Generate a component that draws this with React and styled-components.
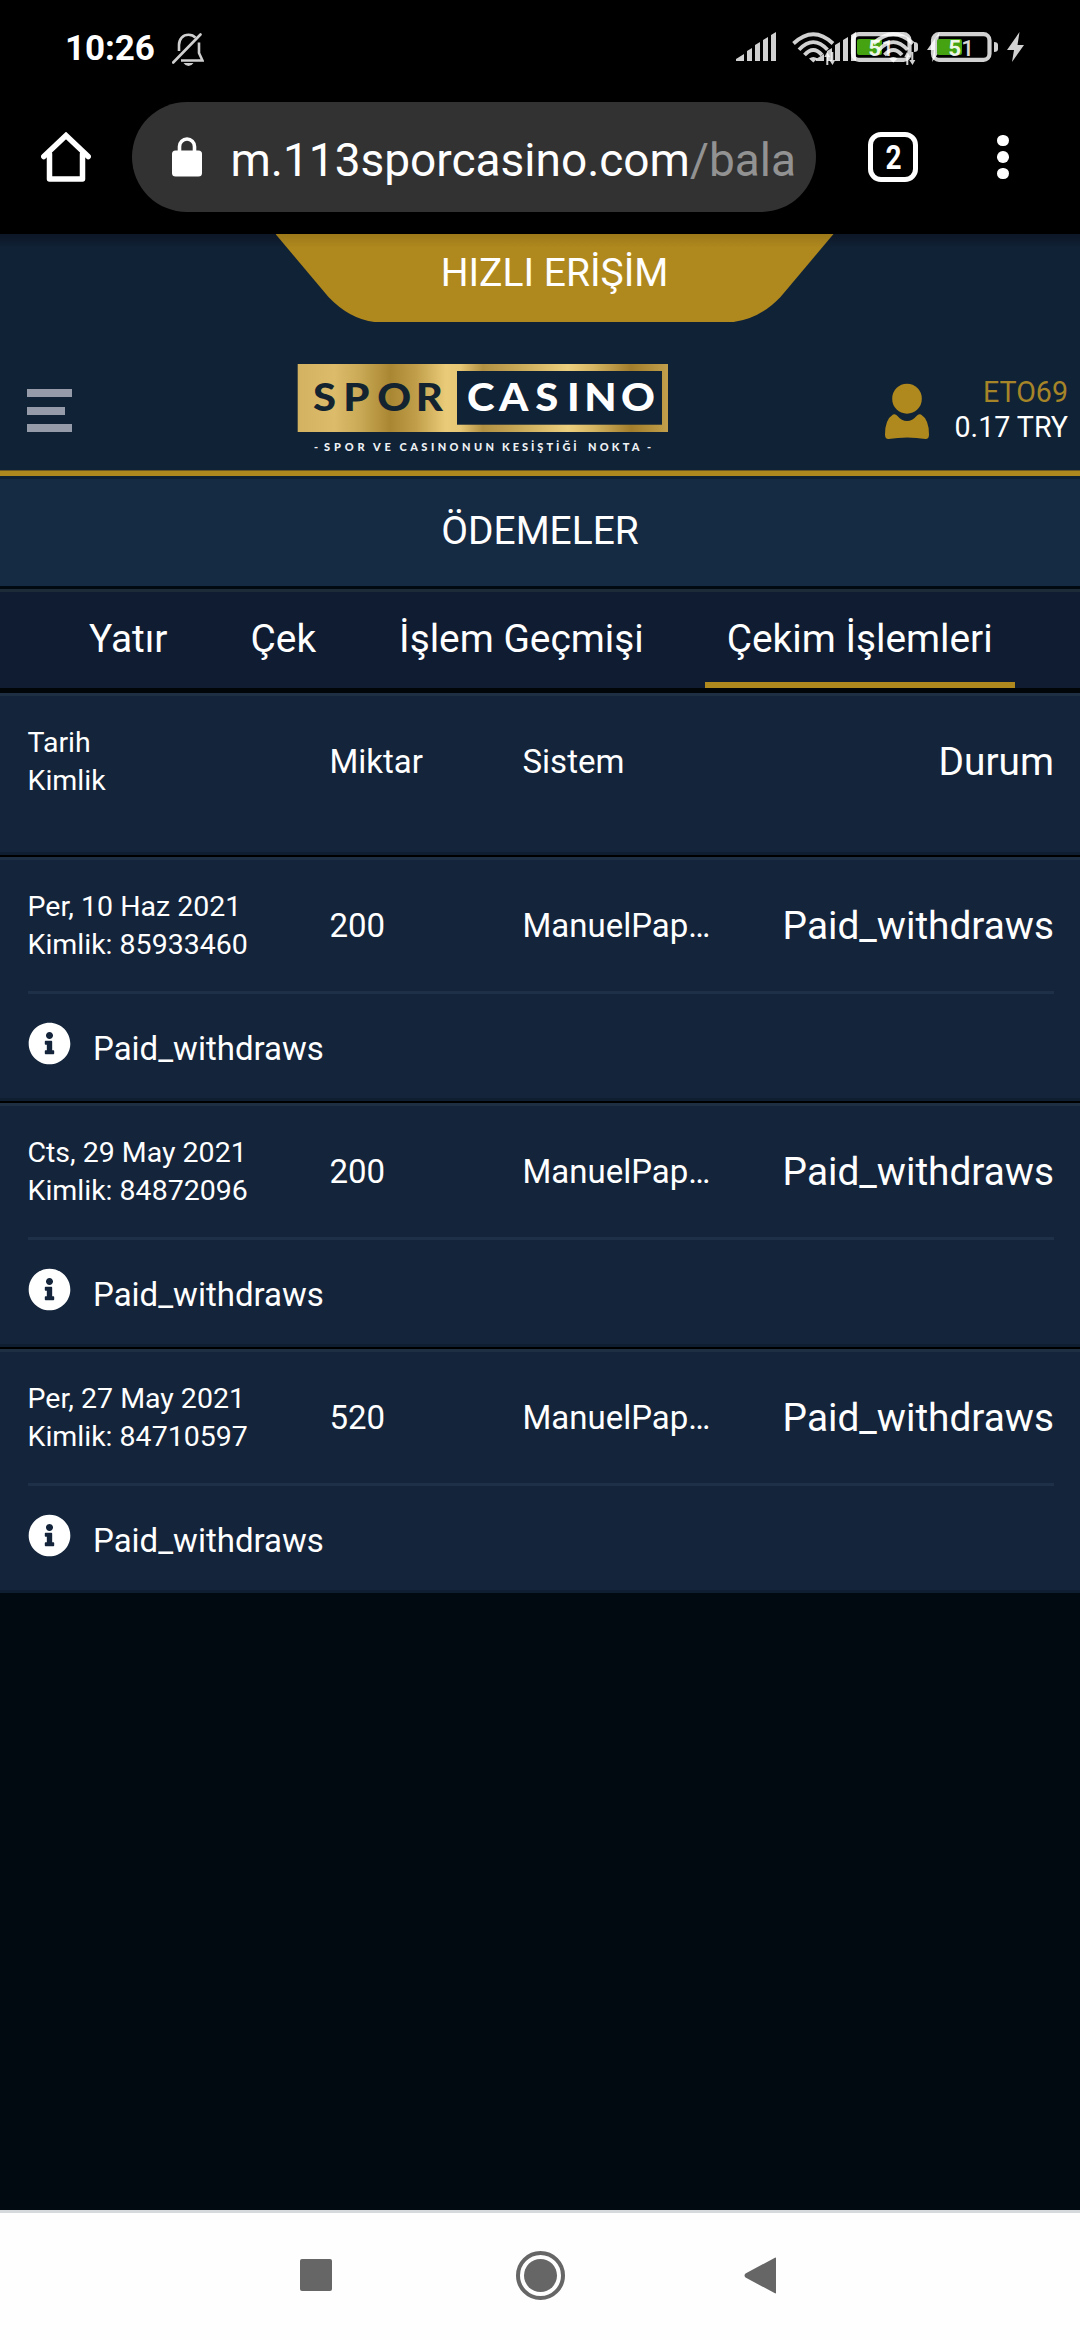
import React from "react";
import styled, { createGlobalStyle } from "styled-components";
import { FaInfoCircle } from "react-icons/fa";

const GOLD = "#b0891e";

const Global = createGlobalStyle`
  * { box-sizing: border-box; }
  body { margin: 0; background: #020a11; }
`;

const Screen = styled.div`
  width: 1080px;
  height: 2340px;
  display: flex;
  flex-direction: column;
  background: #020a11;
  color: #fff;
  font-family: Roboto, "Noto Sans", sans-serif;
  overflow: hidden;
`;

const StatusBar = styled.div`
  height: 98px;
  flex: none;
  background: #000;
  display: flex;
  align-items: center;
  padding: 0 56px 0 65px;
`;

const Clock = styled.span`
  font-size: 35px;
  font-weight: 700;
  line-height: 40px;
  letter-spacing: -0.1px;
`;

const MutedBell = styled.svg`
  margin: 0 auto 0 17px;
`;

const BrowserBar = styled.div`
  height: 136px;
  flex: none;
  background: #000;
  display: flex;
  align-items: flex-start;
  padding: 4px 0 0 41px;
`;

const HomeIcon = styled.svg`
  margin: 30px 41px 0 0;
  flex: none;
`;

const AddressPill = styled.div`
  width: 684px;
  height: 110px;
  border-radius: 55px;
  background: #323232;
  display: flex;
  align-items: center;
  padding-left: 40px;
`;

const Url = styled.span`
  margin: 5px 0 0 28.5px;
  font-size: 46px;
  line-height: 54px;
  white-space: nowrap;
`;

const UrlPath = styled.span`
  color: #929292;
`;

const TabCounter = styled.div`
  width: 50px;
  height: 50px;
  margin: 30px 0 0 52px;
  border: 5.5px solid #fff;
  border-radius: 13px;
  display: flex;
  align-items: center;
  justify-content: center;
  font-size: 33px;
  font-weight: 700;
  line-height: 39px;
`;

const TabCount = styled.span`
  transform: scaleX(0.85);
`;

const MenuDots = styled.div`
  margin: 32.5px 0 0 79px;
  display: flex;
  flex-direction: column;
  gap: 5px;
`;

const Dot = styled.i`
  width: 11.6px;
  height: 11.6px;
  border-radius: 50%;
  background: #fff;
`;

const SiteHeader = styled.header`
  height: 245px;
  flex: none;
  background: linear-gradient(#0c1626, #102236 14px);
  border-bottom: 3px solid #0f2133;
  display: flex;
  flex-direction: column;
`;

const QuickAccess = styled.div`
  width: 558px;
  height: 88px;
  margin-left: 275.5px;
  background: linear-gradient(#9c7819, ${GOLD} 14px);
  clip-path: path("M0 0 H558 L505 63 Q484 85 458 88 H99 Q74 85 53 63 Z");
  font-size: 39px;
  line-height: 79px;
  text-align: center;
`;

const BrandRow = styled.div`
  height: 148px;
  display: flex;
  align-items: flex-start;
  padding: 41px 12px 0 27px;
`;

const Burger = styled.div`
  width: 45px;
  margin-top: 26px;
  display: flex;
  flex-direction: column;
  gap: 9.5px;
`;

const BurgerLine = styled.i`
  width: ${(p) => p.$w}px;
  height: 8px;
  background: #959ba8;
`;

const Logo = styled.svg`
  margin-left: 225px;
  flex: none;
`;

const UserIcon = styled.svg`
  margin: 20px 0 0 215px;
  flex: none;
`;

const Account = styled.div`
  margin: 12px 0 0 auto;
  display: flex;
  flex-direction: column;
  align-items: flex-end;
  font-size: 28.6px;
  line-height: 35px;
  white-space: nowrap;
`;

const UserName = styled.span`
  color: #a68428;
`;

const GoldRule = styled.div`
  height: 6px;
  background: linear-gradient(#6c5822 1px, ${GOLD} 1px);
`;

const PageTitle = styled.h1`
  margin: 0;
  height: 110px;
  flex: none;
  background: #152a43;
  border-bottom: 3px solid #020a11;
  font-size: 38.9px;
  font-weight: 400;
  line-height: 104px;
  text-align: center;
`;

const Tabs = styled.nav`
  height: 104px;
  flex: none;
  background: #0f1c31;
  border-top: 3px solid #1d2b39;
  border-bottom: 5px solid #010508;
  display: flex;
  padding-left: 67px;
  gap: 39px;
`;

const Tab = styled.a`
  height: 96px;
  padding: 0 22px;
  font-size: 38.85px;
  line-height: 94px;
  white-space: nowrap;
  border-bottom: 6px solid ${(p) => (p.$active ? GOLD : "transparent")};
`;

const Card = styled.section`
  flex: none;
  height: ${(p) => (p.$header ? 162 : 244)}px;
  margin-bottom: 2px;
  box-shadow: ${(p) => (p.$last ? "none" : "0 2px #000")};
  padding: 0 26px 0 28px;
  background: #13243b;
  border-top: 3px solid #1e2e43;
  border-bottom: 3px solid #0f1e31;
`;

const Cells = styled.div`
  height: 131px;
  display: grid;
  grid-template-columns: 301px 193px 200px 1fr;
  align-items: center;
`;

const IdCell = styled.div`
  margin-left: -0.5px;
  font-size: 28.5px;
  line-height: 38px;
  white-space: nowrap;
`;

const Cell = styled.div`
  padding-left: 0.5px;
  font-size: 33px;
  line-height: 38px;
  overflow: hidden;
  white-space: nowrap;
`;

const StatusCell = styled.div`
  font-size: 38.8px;
  line-height: 46px;
  text-align: right;
  white-space: nowrap;
`;

const Note = styled.div`
  height: 107px;
  border-top: 3px solid #1e2f48;
  display: flex;
  align-items: flex-start;
  gap: 22px;
  padding-top: 28px;
  font-size: 33px;
  line-height: 54px;
  svg { flex: none; }
`;

const SystemNav = styled.footer`
  height: 130px;
  flex: none;
  margin-top: auto;
  background: #fefefe;
  border-top: 3px solid #d6d9db;
  display: flex;
  align-items: center;
  padding: 0 0 3px 300px;
`;

const HomeKey = styled.svg`
  margin-left: 184px;
`;

const BackKey = styled.svg`
  margin-left: 179px;
`;

const rows = [
  { date: "Per, 10 Haz 2021", id: "85933460", amount: "200" },
  { date: "Cts, 29 May 2021", id: "84872096", amount: "200" },
  { date: "Per, 27 May 2021", id: "84710597", amount: "520" },
];

function StatusGroup({ x }) {
  return (
    <g transform={`translate(${x} 0)`} fill="#fff" fillOpacity="0.82" stroke="none">
      <path d="M0 29v-2l8-5v7zM11 29V19l5-3v13zM19 29V13l5-3v19zM27 29V8l5-3v24zM35 29V3l5-3v29z" />
      <g fill="none" stroke="#fff" strokeOpacity="0.82" strokeWidth="3.8">
        <path d="M57.5 11.5Q77.3-7 97 11.5M63 17.7Q77.3 2.500 91.500 17.700M68.500 23Q77.300 13 86 23" />
      </g>
      <path d="M73 26.500Q77.300 23.500 81.600 26.500L77.300 30.500zM91 20l3.300 5h-2v8h-2V25h-2zM96.500 33l-3.200-5h2v-8h2v8h2z" />
      <rect x="121" y="7" width="25" height="16" rx="2" fill="#45a311" fillOpacity="1" />
      <rect x="117" y="2.200" width="56.500" height="25.600" rx="6" fill="none" stroke="#fff" strokeOpacity="0.82" strokeWidth="4.200" />
      <path d="M178 10q4 0 4 3v4q0 3-4 3z" />
      <path d="M203.500 0L191 18h7l-2 12L208 13h-6.500z" />
      <text y="23.600" x="132.300" fontFamily="Roboto, sans-serif" fontSize="22.500" fontWeight="700" fillOpacity="0.92">
        5<tspan fontWeight="500" fillOpacity="0.85">1</tspan>
      </text>
    </g>
  );
}

function LogoMark() {
  return (
    <Logo width="372" height="92" viewBox="297 362 372 92">
      <defs>
        <linearGradient id="gold">
          <stop offset="0" stopColor="#d3b361" />
          <stop offset="0.1" stopColor="#dcbc6b" />
          <stop offset="0.17" stopColor="#c9a955" />
          <stop offset="0.25" stopColor="#a98632" />
          <stop offset="0.32" stopColor="#c19f4a" />
          <stop offset="0.4" stopColor="#eacb79" />
          <stop offset="0.44" stopColor="#e6c775" />
          <stop offset="0.5" stopColor="#b29143" />
          <stop offset="0.6" stopColor="#c9aa58" />
          <stop offset="0.73" stopColor="#edd07f" />
          <stop offset="0.8" stopColor="#d5b561" />
          <stop offset="0.9" stopColor="#a27d2b" />
          <stop offset="1" stopColor="#c2a04b" />
        </linearGradient>
      </defs>
      <rect x="297.700" y="363" width="370.300" height="68" fill="url(#gold)" />
      <rect x="457" y="370" width="205" height="53.700" fill="#102236" />
      <g fontFamily="Lato, sans-serif" fontWeight="900" fontSize="38">
        <text y="410.500" transform="translate(313 0) scale(1.1 1)" x="0 27.500 58.300 93.500" fill="#132430">SPOR</text>
        <text y="410.500" transform="translate(467 0) scale(1.1 1)" x="0 29 62 91 106.500 140" fill="#fff">CASINO</text>
      </g>
      <g fontFamily="Lato, sans-serif" fontWeight="900" fontSize="11" fill="#eef1f4">
        <text y="450">
          <tspan x="314">-</tspan>
          <tspan x="324" letterSpacing="3.900">SPOR </tspan>
          <tspan x="373" letterSpacing="3.800">VE </tspan>
          <tspan x="399.500" letterSpacing="3.450">CASINONUN </tspan>
          <tspan x="502" letterSpacing="3">KESİŞTİĞİ </tspan>
          <tspan x="588" letterSpacing="3.200">NOKTA </tspan>
          <tspan x="647">-</tspan>
        </text>
      </g>
    </Logo>
  );
}

export default function App() {
  return (
    <Screen>
      <Global />
      <StatusBar>
        <Clock>10:26</Clock>
        <MutedBell width="32" height="33" viewBox="0 0 32 33" fill="none" stroke="#cfcfcf" strokeWidth="2.6">
          <path d="M7 18V12C7 6 11 1.700 16.500 1.700c3.200 0 5.400 1.100 7 3M27 9.500V20l3.500 7.500H9" />
          <path d="M1.200 29.500L28.500 1.500" strokeLinecap="round" />
          <path d="M11.500 30h10q-2 3-5 3t-5-3z" fill="#cfcfcf" stroke="none" />
        </MutedBell>
        <svg width="288" height="34" viewBox="0 0 288 34">
          <StatusGroup x={0} />
          <StatusGroup x={80} />
        </svg>
      </StatusBar>

      <BrowserBar>
        <HomeIcon width="50" height="50" viewBox="0 0 50 50" fill="none" stroke="#fff" strokeWidth="5.5" strokeLinecap="round" strokeLinejoin="round">
          <path d="M2.800 24.500L25 3.500 47.200 24.500" strokeLinejoin="miter" />
          <path d="M8.500 22V47h33V22" />
        </HomeIcon>
        <AddressPill>
          <svg width="30" height="40" viewBox="0 0 30 40">
            <path d="M7.500 16V9.500a7.500 7.500 0 0 1 15 0V16" fill="none" stroke="#fff" strokeWidth="3.600" />
            <rect y="13.500" width="30" height="26" rx="3.500" fill="#fff" />
          </svg>
          <Url>
            m.113sporcasino.com<UrlPath>/bala</UrlPath>
          </Url>
        </AddressPill>
        <TabCounter>
          <TabCount>2</TabCount>
        </TabCounter>
        <MenuDots>
          <Dot />
          <Dot />
          <Dot />
        </MenuDots>
      </BrowserBar>

      <SiteHeader>
        <QuickAccess>HIZLI ERİŞİM</QuickAccess>
        <BrandRow>
          <Burger>
            <BurgerLine $w={45} />
            <BurgerLine $w={38} />
            <BurgerLine $w={45} />
          </Burger>
          <LogoMark />
          <UserIcon width="46" height="58" viewBox="884 382 46 58" fill={GOLD}>
            <ellipse cx="907" cy="397.700" rx="14.800" ry="15" />
            <path d="M893 413.500q2.500-1 4.500 1.500q4 5 9.500 5t9.500-5q2-2.500 4.500-1.500q8 5 8 20q0 4.500-3.500 4.500q-18-3-37 0q-3.500 0-3.500-4.500q0-15 8-20z" />
          </UserIcon>
          <Account>
            <UserName>ETO69</UserName>
            <span>0.17 TRY</span>
          </Account>
        </BrandRow>
        <GoldRule />
      </SiteHeader>

      <PageTitle>ÖDEMELER</PageTitle>

      <Tabs>
        <Tab>Yatır</Tab>
        <Tab>Çek</Tab>
        <Tab>İşlem Geçmişi</Tab>
        <Tab $active>Çekim İşlemleri</Tab>
      </Tabs>

      <Card $header>
        <Cells>
          <IdCell>
            Tarih
            <br />
            Kimlik
          </IdCell>
          <Cell>Miktar</Cell>
          <Cell>Sistem</Cell>
          <StatusCell>Durum</StatusCell>
        </Cells>
      </Card>

      {rows.map((row, i) => (
        <Card key={row.id} $last={i === rows.length - 1}>
          <Cells>
            <IdCell>
              {row.date}
              <br />
              Kimlik: {row.id}
            </IdCell>
            <Cell>{row.amount}</Cell>
            <Cell>ManuelPap…</Cell>
            <StatusCell>Paid_withdraws</StatusCell>
          </Cells>
          <Note>
            <FaInfoCircle size={43} />
            <span>Paid_withdraws</span>
          </Note>
        </Card>
      ))}

      <SystemNav>
        <svg width="32" height="32" viewBox="0 0 32 32">
          <rect width="32" height="32" rx="2" fill="#666" />
        </svg>
        <HomeKey width="49" height="49" viewBox="0 0 49 49">
          <circle cx="24.500" cy="24.500" r="22.500" fill="none" stroke="#666" strokeWidth="4" />
          <circle cx="24.500" cy="24.500" r="16.500" fill="#666" />
        </HomeKey>
        <BackKey width="33" height="37" viewBox="0 0 33 37">
          <path d="M32 1.500v34q0 1.500-1.500 0.500L1.500 20.500q-2-2 0-4L30.500 1q1.500-1 1.500 0.500z" fill="#666" />
        </BackKey>
      </SystemNav>
    </Screen>
  );
}
